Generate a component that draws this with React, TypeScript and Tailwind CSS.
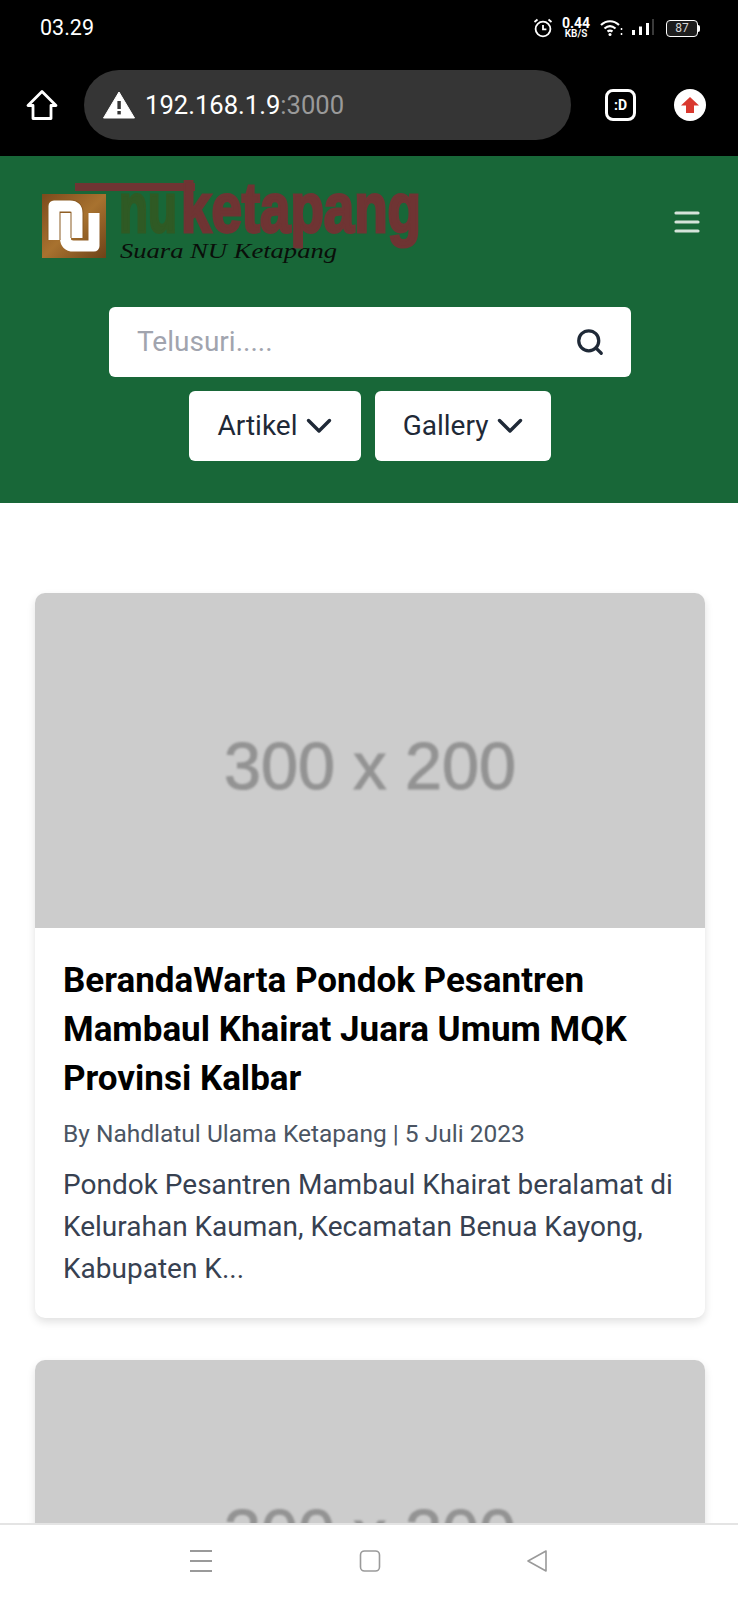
import { Search } from "lucide-react";

function Placeholder() {
  return (
    <div className="h-[335px] bg-[#cccccc] flex items-center justify-center pt-[12px]">
      <span className="text-[#939393] text-[66.5px] leading-none font-['Liberation_Sans'] [-webkit-text-stroke:1px_#939393] blur-[1px]">300 x 200</span>
    </div>
  );
}

function Chevron() {
  return (
    <svg width="26" height="16" viewBox="0 0 26 16" fill="none" stroke="currentColor" strokeWidth="3.4" strokeLinecap="round" strokeLinejoin="round">
      <path d="M2.5 2.5 13 13 23.5 2.5" />
    </svg>
  );
}

function StatusIcons() {
  return (
    <div className="flex items-center gap-[6px] text-white">
      <svg width="20" height="22" viewBox="0 0 20 22" fill="none" stroke="currentColor" strokeWidth="1.8">
        <circle cx="10" cy="12" r="7.4" />
        <path d="M10 8V12.4H13.4" />
        <path d="M1.5 5 4.5 2.5M18.5 5 15.5 2.5" />
      </svg>
      <div className="flex flex-col items-center leading-none ml-[2px] w-[30px]">
        <span className="text-[14px] font-bold leading-[12px]">0.44</span>
        <span className="text-[10px] font-semibold leading-[10px]">KB/S</span>
      </div>
      <svg width="24" height="18" viewBox="0 0 24 18" fill="none" stroke="currentColor" strokeWidth="2.2" className="ml-[3px]">
        <path d="M1 6C6.5 1 13.5 1 19 6" />
        <path d="M4.5 9.5C8 6.5 12 6.5 15.5 9.5" />
        <path d="M7.5 12.5C9 11.5 11 11.5 12.5 12.5" />
        <circle cx="10" cy="15.5" r="1.5" fill="currentColor" stroke="none" />
        <path d="M21.5 9v2M21.5 14v2" strokeWidth="1.5" />
      </svg>
      <svg width="22" height="18" viewBox="0 0 22 18" fill="currentColor" className="ml-[2px]">
        <rect x="0" y="11" width="3" height="5" />
        <rect x="7" y="7.5" width="3" height="8.5" />
        <rect x="14" y="4" width="3" height="12" />
        <rect x="20" y="0" width="2" height="16" fill="#3a3a3a" />
      </svg>
      <div className="ml-[6px] flex items-center">
        <div className="w-[32px] h-[17px] rounded-[4px] border border-white flex items-center justify-center text-[12px] leading-none text-[#d5d5d5] bg-[#1d1d1d]">
          87
        </div>
        <div className="w-[2px] h-[7px] bg-white rounded-r-sm" />
      </div>
    </div>
  );
}

function BrowserBar() {
  return (
    <div className="h-[156px] bg-black flex flex-col">
      <div className="flex items-center justify-between pl-[40px] pr-[38px] pt-[16px] h-[56px]">
        <span className="text-white text-[21.5px] leading-none font-['Roboto'] mt-[-16px]">03.29</span>
        <div className="mt-[-16px]"><StatusIcons /></div>
      </div>
      <div className="flex items-center mt-[14px] pl-[26px]">
        <svg width="32" height="32" viewBox="0 0 32 32" fill="none" stroke="white" strokeWidth="2.8" strokeLinejoin="round">
          <path d="M16 2.5 2 16.5H7V29.5H25V16.5H30Z" />
        </svg>
        <div className="ml-[26px] w-[487px] h-[70px] rounded-full bg-[#353535] flex items-center pl-[19px]">
          <svg width="32" height="28" viewBox="0 0 32 28">
            <path d="M16 1 31.5 27H.5Z" fill="white" stroke="white" strokeLinejoin="round" />
            <rect x="14.4" y="10" width="3.4" height="8" fill="#353535" />
            <rect x="14.4" y="20" width="3.4" height="3.4" fill="#353535" />
          </svg>
          <span className="ml-[10px] mt-[2px] text-[25.6px] leading-none font-['Roboto'] text-white">
            192.168.1.9<span className="text-[#9a9a9a]">:3000</span>
          </span>
        </div>
        <div className="ml-[34px] w-[31px] h-[32px] rounded-[8px] border-[3px] border-white flex items-center justify-center text-white text-[14px] font-bold leading-none font-['Roboto']">
          :D
        </div>
        <div className="ml-[38px] w-[32px] h-[32px] rounded-full bg-white flex items-center justify-center">
          <svg width="18" height="16" viewBox="0 0 18 16" fill="#d9382e">
            <path d="M9 0 18 8.5H13V16H5V8.5H0Z" />
          </svg>
        </div>
      </div>
    </div>
  );
}

function Logo() {
  return (
    <svg width="384" height="90" viewBox="0 0 384 90">
      <defs>
        <linearGradient id="tile" x1="0" y1="0" x2="1" y2="1">
          <stop offset="0" stopColor="#7c4a1c" />
          <stop offset="0.5" stopColor="#a8722f" />
          <stop offset="1" stopColor="#6d4218" />
        </linearGradient>
      </defs>
      <rect x="0" y="14" width="64" height="64" fill="url(#tile)" />
      {/* interlocked n + u mark */}
      <g fill="none" strokeLinejoin="round">
        <path d="M23.5 33V58Q23.5 66 31.5 66H52V33" stroke="white" strokeWidth="11" />
        <path d="M12 60V26H28Q35 26 35 33V58" stroke="#8a5a20" strokeWidth="13" />
        <path d="M12 60V26H28Q35 26 35 33V58" stroke="white" strokeWidth="11" />
      </g>
      <path d="M33 7H153" fill="none" stroke="#6f3433" strokeWidth="8" />
      <path d="M147 3V22" fill="none" stroke="#6f3433" strokeWidth="7" />
      <text x="77" y="52" fontFamily="Liberation Sans" fontWeight="700" fontSize="70" textLength="58" lengthAdjust="spacingAndGlyphs" stroke="#2f5a24" strokeWidth="3" fill="#2f5a24">nu</text>
      <text x="139" y="52" fontFamily="Liberation Sans" fontWeight="700" fontSize="70" textLength="240" lengthAdjust="spacingAndGlyphs" stroke="#6f3433" strokeWidth="3" fill="#6f3433">ketapang</text>
      <text x="78" y="78" fontFamily="Liberation Serif" fontStyle="italic" fontSize="22" textLength="217" lengthAdjust="spacingAndGlyphs" fill="#0a0f0a">Suara NU Ketapang</text>
    </svg>
  );
}

function Header() {
  return (
    <header className="h-[347px] bg-[#186738]">
      <div className="flex items-start justify-between pl-[42px] pr-[38px] pt-[24px]">
        <Logo />
        <svg width="26" height="24" viewBox="0 0 26 24" fill="none" stroke="#d5e3da" strokeWidth="3.2" strokeLinecap="round" className="mt-[30px]">
          <path d="M2 3H24M2 12H24M2 21H24" />
        </svg>
      </div>
      <div className="flex flex-col items-center mt-[37px] pl-[2px]">
        <div className="w-[522px] h-[70px] bg-white rounded-[6px] flex items-center justify-between pl-[28px] pr-[26px]">
          <span className="text-[28px] leading-none text-[#a1a4ae]">Telusuri.....</span>
          <Search size={30} strokeWidth={2.6} className="text-[#1f2937]" />
        </div>
        <div className="flex gap-[14px] mt-[14px]">
          <button className="w-[172px] h-[70px] bg-white rounded-[6px] flex items-center justify-center gap-[9px] text-[28px] text-[#1f2937]">
            Artikel <Chevron />
          </button>
          <button className="w-[176px] h-[70px] bg-white rounded-[6px] flex items-center justify-center gap-[9px] text-[28px] text-[#1f2937]">
            Gallery <Chevron />
          </button>
        </div>
      </div>
    </header>
  );
}

function ArticleCard() {
  return (
    <article className="bg-white rounded-[10px] overflow-hidden shadow-[0_4px_8px_rgba(0,0,0,0.12)]">
      <Placeholder />
      <div className="px-[28px] pt-[28px] pb-[28px]">
        <h2 className="text-[35px] leading-[49px] font-bold text-black">
          BerandaWarta Pondok Pesantren Mambaul Khairat Juara Umum MQK Provinsi Kalbar
        </h2>
        <p className="mt-[14px] text-[24.5px] leading-[33px] text-[#4b5563]">
          By Nahdlatul Ulama Ketapang | 5 Juli 2023
        </p>
        <p className="mt-[14px] text-[28px] leading-[42px] text-[#374151]">
          Pondok Pesantren Mambaul Khairat beralamat di Kelurahan Kauman, Kecamatan Benua Kayong, Kabupaten K...
        </p>
      </div>
    </article>
  );
}

function SystemNav() {
  return (
    <div className="h-[77px] shrink-0 bg-white border-t-2 border-[#e4e4e4] flex items-start">
      <div className="flex w-full justify-center gap-[145px] pt-[24px] pl-[1px]">
        <svg width="24" height="24" viewBox="0 0 24 24" fill="none" stroke="#9a9a9a" strokeWidth="2">
          <path d="M1 2H23M1 12H23M1 22H23" />
        </svg>
        <svg width="24" height="24" viewBox="0 0 24 24" fill="none" stroke="#9a9a9a" strokeWidth="1.6">
          <rect x="2.5" y="2" width="19" height="20" rx="4" />
        </svg>
        <svg width="24" height="24" viewBox="0 0 24 24" fill="none" stroke="#9a9a9a" strokeWidth="1.6" strokeLinejoin="round">
          <path d="M19 2V22L1 12Z" />
        </svg>
      </div>
    </div>
  );
}

export default function App() {
  return (
    <div className="h-[1600px] w-[738px] flex flex-col overflow-hidden bg-white font-['Roboto',sans-serif]">
      <BrowserBar />
      <main className="flex-1 min-h-0 overflow-hidden">
        <Header />
        <div className="pl-[35px] pr-[33px] pt-[90px] flex flex-col gap-[42px]">
          <ArticleCard />
          <ArticleCard />
        </div>
      </main>
      <SystemNav />
    </div>
  );
}
